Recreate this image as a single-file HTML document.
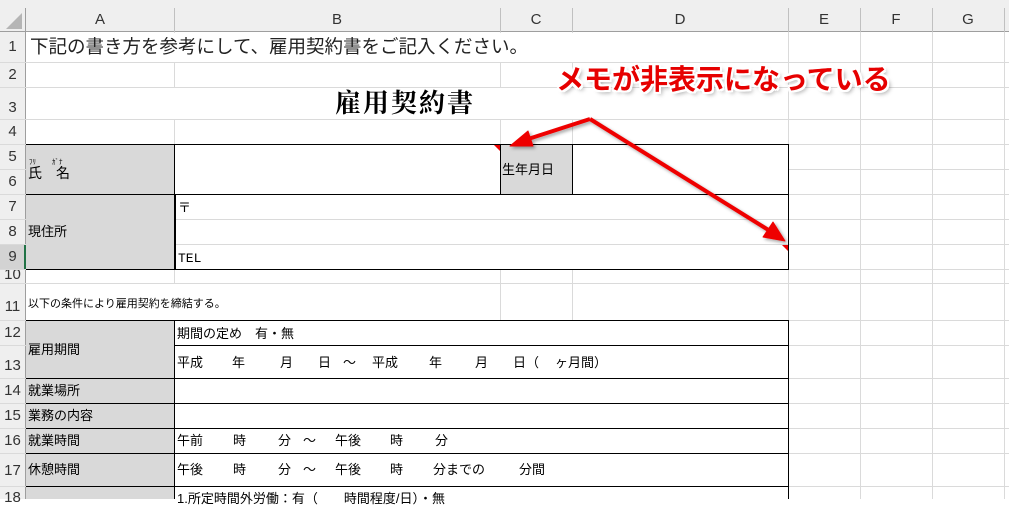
<!DOCTYPE html>
<html><head><meta charset="utf-8"><style>
*{margin:0;padding:0;box-sizing:border-box}
body{width:1009px;height:499px;overflow:hidden;background:#fff;position:relative;font-family:"Liberation Sans","Noto Sans CJK JP",sans-serif;color:#000}
.a{position:absolute}
.hl{position:absolute;height:1px;background:#dadada}
.vl{position:absolute;width:1px;background:#dadada}
.t{position:absolute;font-size:13px;line-height:16px;white-space:nowrap}
.rn{position:absolute;left:0;width:25px;text-align:center;font-size:15px;color:#333;line-height:16px}
.ch{position:absolute;top:8px;height:24px;line-height:24px;text-align:center;font-size:15px;color:#333}
.g{position:absolute;background:#d9d9d9}
.bk{position:absolute;background:#000}
</style></head><body>
<div class="a" style="left:0;top:0;width:1009px;height:32px;background:#efefef"></div>
<div class="a" style="left:0;top:0;width:26px;height:499px;background:#efefef"></div>
<div class="a" style="left:0;top:31px;width:1009px;height:1px;background:#9e9e9e"></div>
<div class="a" style="left:25px;top:8px;width:1px;height:491px;background:#9e9e9e"></div>
<div class="a" style="left:6px;top:13px;width:0;height:0;border-left:16px solid transparent;border-bottom:16px solid #b5b5b5"></div>
<div class="ch" style="left:26px;width:148px">A</div>
<div class="ch" style="left:174px;width:326px">B</div>
<div class="ch" style="left:500px;width:72px">C</div>
<div class="ch" style="left:572px;width:216px">D</div>
<div class="ch" style="left:788px;width:72px">E</div>
<div class="ch" style="left:860px;width:72px">F</div>
<div class="ch" style="left:932px;width:72px">G</div>
<div class="vl" style="left:174px;top:8px;height:24px;background:#c0c0c0"></div>
<div class="vl" style="left:500px;top:8px;height:24px;background:#c0c0c0"></div>
<div class="vl" style="left:572px;top:8px;height:24px;background:#c0c0c0"></div>
<div class="vl" style="left:788px;top:8px;height:24px;background:#c0c0c0"></div>
<div class="vl" style="left:860px;top:8px;height:24px;background:#c0c0c0"></div>
<div class="vl" style="left:932px;top:8px;height:24px;background:#c0c0c0"></div>
<div class="vl" style="left:1004px;top:8px;height:24px;background:#c0c0c0"></div>
<div class="a" style="left:0;top:244px;width:25px;height:25px;background:#d3d3d3"></div>
<div class="a" style="left:24px;top:244px;width:2px;height:25px;background:#217346"></div>
<div class="vl" style="left:174px;top:32px;height:467px"></div>
<div class="vl" style="left:500px;top:32px;height:467px"></div>
<div class="vl" style="left:572px;top:32px;height:467px"></div>
<div class="vl" style="left:788px;top:32px;height:467px"></div>
<div class="vl" style="left:860px;top:32px;height:467px"></div>
<div class="vl" style="left:932px;top:32px;height:467px"></div>
<div class="vl" style="left:1004px;top:32px;height:467px"></div>
<div class="hl" style="left:0;top:62px;width:1009px"></div>
<div class="hl" style="left:0;top:87px;width:1009px"></div>
<div class="hl" style="left:0;top:119px;width:1009px"></div>
<div class="hl" style="left:0;top:144px;width:1009px"></div>
<div class="hl" style="left:0;top:169px;width:1009px"></div>
<div class="hl" style="left:0;top:194px;width:1009px"></div>
<div class="hl" style="left:0;top:219px;width:1009px"></div>
<div class="hl" style="left:0;top:244px;width:1009px"></div>
<div class="hl" style="left:0;top:269px;width:1009px"></div>
<div class="hl" style="left:0;top:283px;width:1009px"></div>
<div class="hl" style="left:0;top:320px;width:1009px"></div>
<div class="hl" style="left:0;top:345px;width:1009px"></div>
<div class="hl" style="left:0;top:378px;width:1009px"></div>
<div class="hl" style="left:0;top:403px;width:1009px"></div>
<div class="hl" style="left:0;top:428px;width:1009px"></div>
<div class="hl" style="left:0;top:453px;width:1009px"></div>
<div class="hl" style="left:0;top:486px;width:1009px"></div>
<div class="a" style="left:26px;top:33px;width:762px;height:29px;background:#fff"></div>
<div class="a" style="left:26px;top:88px;width:762px;height:31px;background:#fff"></div>
<div class="a" style="left:26px;top:284px;width:474px;height:36px;background:#fff"></div>
<div class="a" style="left:175px;top:145px;width:325px;height:49px;background:#fff"></div>
<div class="a" style="left:573px;top:145px;width:215px;height:49px;background:#fff"></div>
<div class="a" style="left:175px;top:195px;width:613px;height:74px;background:#fff"></div>
<div class="a" style="left:175px;top:321px;width:613px;height:24px;background:#fff"></div>
<div class="a" style="left:175px;top:346px;width:613px;height:32px;background:#fff"></div>
<div class="a" style="left:175px;top:379px;width:613px;height:24px;background:#fff"></div>
<div class="a" style="left:175px;top:404px;width:613px;height:24px;background:#fff"></div>
<div class="a" style="left:175px;top:429px;width:613px;height:24px;background:#fff"></div>
<div class="a" style="left:175px;top:454px;width:613px;height:32px;background:#fff"></div>
<div class="a" style="left:175px;top:487px;width:613px;height:12px;background:#fff"></div>
<div class="g" style="left:26px;top:144px;width:148px;height:50px"></div>
<div class="g" style="left:500px;top:144px;width:72px;height:50px"></div>
<div class="g" style="left:26px;top:194px;width:148px;height:75px"></div>
<div class="g" style="left:26px;top:320px;width:148px;height:179px"></div>
<div class="bk" style="left:26px;top:144px;width:763px;height:1px"></div>
<div class="bk" style="left:26px;top:194px;width:763px;height:1px"></div>
<div class="bk" style="left:26px;top:269px;width:763px;height:1px"></div>
<div class="bk" style="left:174px;top:144px;width:1px;height:126px"></div>
<div class="bk" style="left:174px;top:194px;width:2px;height:76px"></div>
<div class="bk" style="left:500px;top:144px;width:1px;height:50px"></div>
<div class="bk" style="left:572px;top:144px;width:1px;height:50px"></div>
<div class="bk" style="left:788px;top:144px;width:1px;height:126px"></div>
<div class="a" style="left:176px;top:244px;width:612px;height:1px;background:#dadada"></div>
<div class="a" style="left:176px;top:219px;width:612px;height:1px;background:#dadada"></div>
<div class="bk" style="left:26px;top:320px;width:763px;height:1px"></div>
<div class="a" style="left:174px;top:345px;width:614px;height:1px;background:#000"></div>
<div class="bk" style="left:26px;top:378px;width:763px;height:1px"></div>
<div class="bk" style="left:26px;top:403px;width:763px;height:1px"></div>
<div class="bk" style="left:26px;top:428px;width:763px;height:1px"></div>
<div class="bk" style="left:26px;top:453px;width:763px;height:1px"></div>
<div class="bk" style="left:26px;top:486px;width:763px;height:1px"></div>
<div class="bk" style="left:174px;top:320px;width:1px;height:179px"></div>
<div class="bk" style="left:788px;top:320px;width:1px;height:179px"></div>
<div class="a" style="left:494px;top:145px;width:0;height:0;border-left:6px solid transparent;border-top:6px solid #e00"></div>
<div class="a" style="left:782px;top:245px;width:0;height:0;border-left:6px solid transparent;border-top:6px solid #e00"></div>
<div class="rn" style="top:39px">1</div>
<div class="rn" style="top:67px">2</div>
<div class="rn" style="top:100px">3</div>
<div class="rn" style="top:124px">4</div>
<div class="rn" style="top:149px">5</div>
<div class="rn" style="top:174px">6</div>
<div class="rn" style="top:199px">7</div>
<div class="rn" style="top:224px">8</div>
<div class="rn" style="top:249px">9</div>
<div class="a" style="left:0;top:270px;width:25px;height:13px;overflow:hidden"><div class="rn" style="top:-3px">10</div></div>
<div class="rn" style="top:299px">11</div>
<div class="rn" style="top:325px">12</div>
<div class="rn" style="top:358px">13</div>
<div class="rn" style="top:383px">14</div>
<div class="rn" style="top:408px">15</div>
<div class="rn" style="top:433px">16</div>
<div class="rn" style="top:463px">17</div>
<div class="rn" style="top:490px">18</div>
<div class="t" style="left:30px;top:36px;font-size:18.5px;line-height:22px;color:#222">下記の書き方を参考にして、雇用契約書をご記入ください。</div>
<div class="t" style="left:335px;top:88px;font-family:'Liberation Serif','Noto Serif CJK SC',serif;font-size:26px;line-height:32px;font-weight:bold;letter-spacing:2px">雇用契約書</div>
<div class="t" style="left:29px;top:159px;font-size:7px;line-height:8px">ﾌﾘ　　 ｶﾞﾅ</div>
<div class="t" style="left:28px;top:165px;font-size:14px">氏　名</div>
<div class="t" style="left:502px;top:162px">生年月日</div>
<div class="t" style="left:28px;top:224px">現住所</div>
<div class="t" style="left:178px;top:200px">〒</div>
<div class="t" style="left:178px;top:251px;font-family:'Liberation Mono','Noto Sans CJK JP',monospace;font-size:13px">TEL</div>
<div class="t" style="left:28px;top:296px;font-size:11px">以下の条件により雇用契約を締結する。</div>
<div class="t" style="left:28px;top:342px">雇用期間</div>
<div class="t" style="left:177px;top:326px">期間の定め　有・無</div>
<div class="t" style="left:177px;top:355px">平成</div><div class="t" style="left:232px;top:355px">年</div><div class="t" style="left:280px;top:355px">月</div><div class="t" style="left:318px;top:355px">日</div><div class="t" style="left:343px;top:355px">～</div><div class="t" style="left:372px;top:355px">平成</div><div class="t" style="left:429px;top:355px">年</div><div class="t" style="left:475px;top:355px">月</div><div class="t" style="left:513px;top:355px">日（</div><div class="t" style="left:555px;top:355px">ヶ月間）</div>
<div class="t" style="left:28px;top:383px">就業場所</div>
<div class="t" style="left:28px;top:408px">業務の内容</div>
<div class="t" style="left:28px;top:433px">就業時間</div>
<div class="t" style="left:177px;top:433px">午前</div><div class="t" style="left:233px;top:433px">時</div><div class="t" style="left:278px;top:433px">分</div><div class="t" style="left:303px;top:433px">～</div><div class="t" style="left:335px;top:433px">午後</div><div class="t" style="left:390px;top:433px">時</div><div class="t" style="left:435px;top:433px">分</div>
<div class="t" style="left:28px;top:462px">休憩時間</div>
<div class="t" style="left:177px;top:462px">午後</div><div class="t" style="left:233px;top:462px">時</div><div class="t" style="left:278px;top:462px">分</div><div class="t" style="left:303px;top:462px">～</div><div class="t" style="left:335px;top:462px">午後</div><div class="t" style="left:390px;top:462px">時</div><div class="t" style="left:433px;top:462px">分までの</div><div class="t" style="left:519px;top:462px">分間</div>
<div class="t" style="left:177px;top:491px;white-space:pre">1.所定時間外労働：有（　　時間程度/日）・無</div>
<svg class="a" style="left:0;top:0" width="1009" height="499">
<defs><filter id="s" x="-10%" y="-10%" width="120%" height="120%"><feDropShadow dx="2" dy="2" stdDeviation="1.5" flood-opacity="0.35"/></filter></defs>
<g fill="#e00" stroke="#e00" stroke-linejoin="round" filter="url(#s)">
<line x1="590" y1="119" x2="522" y2="141" stroke-width="4"/>
<polygon points="510,146 528,131 533,146" stroke-width="1"/>
<line x1="590" y1="119" x2="770" y2="231" stroke-width="4"/>
<polygon points="785,241 763,237 773,222" stroke-width="1"/>
</g>
</svg>
<div class="t" style="left:556px;top:62px;font-size:28px;line-height:36px;font-weight:bold;color:#e60000;text-shadow:2px 0 #fff,-2px 0 #fff,0 2px #fff,0 -2px #fff,2px 2px #fff,-2px -2px #fff,2px -2px #fff,-2px 2px #fff,3px 3px 4px rgba(0,0,0,.35)">メモが非表示になっている</div>
</body></html>
